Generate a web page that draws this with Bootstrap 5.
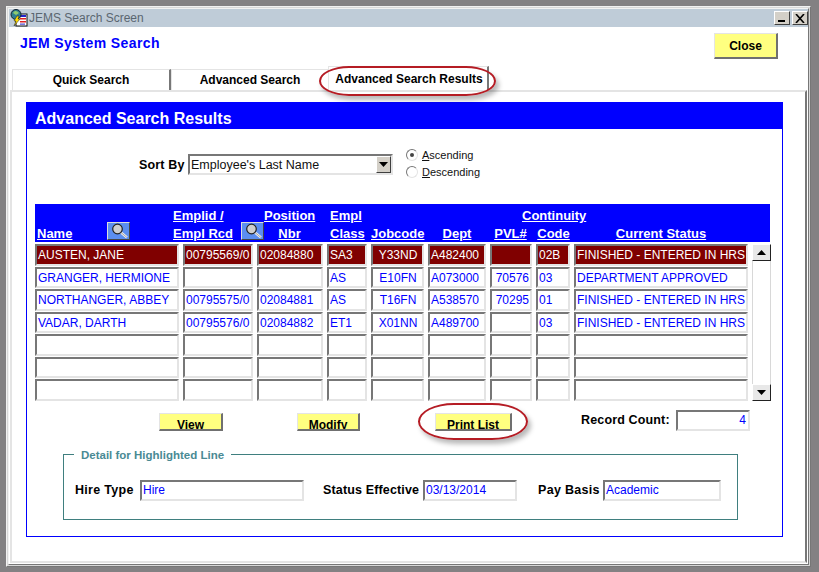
<!DOCTYPE html>
<html lang="en">
<head>
<meta charset="utf-8">
<title>JEMS Search Screen</title>
<link href="https://cdn.jsdelivr.net/npm/bootstrap@5.3.0/dist/css/bootstrap.min.css" rel="stylesheet">
<style>
html,body{margin:0;height:572px;overflow:hidden;background:#838183;}
body{font-family:"Liberation Sans",Arial,sans-serif;font-size:12px;color:#000;padding:6px 8px 5px 6px;}
.win{position:relative;width:805px;height:561px;background:#fff;border:3px solid;border-color:#f2f2f2 #777 #777 #f2f2f2;outline:1px solid #d8d8d8;outline-offset:-2px;}
.tbar{height:18px;background:#bfccd8;color:#5a6670;font-size:12px;line-height:19px;}
.wbtns{gap:2px;margin-top:2px;}
.wbtn{width:16px;height:14px;background:#d4d0c8;border:1px solid;border-color:#fff #404040 #404040 #fff;display:flex;align-items:center;justify-content:center;}
.sysico{width:18px;height:18px;flex:none;margin:0 1px 0 1px;}
.hdrow{height:40px;padding:6px 30px 0 11px;}
.jem{color:#0000ff;font-weight:700;font-size:14px;letter-spacing:.4px;line-height:20px;}
.ybtn{background:#ffff80;border:1px solid;border-color:#e4e4e4 #707070 #707070 #e4e4e4;border-width:1px 2px 2px 1px;font-weight:700;font-size:12px;color:#000;padding:0;}
.closeb{width:64px;height:26px;padding-top:1px;}
.tabs{height:23px;padding-left:3px;align-items:flex-end;}
.tabi{height:21px;border:1px solid #e4e4e4;border-bottom:0;font-weight:700;font-size:12px;text-align:center;line-height:20px;}
.t1{width:159px;border-right:2px solid #777;}
.t2{width:157px;border-right:0;}
.t3{width:161px;height:24px;line-height:25px;border-right:2px solid #777;padding-left:2px;}
.tabbody{width:797px;height:473px;margin-left:1px;border:2px solid #e4e4e4;border-right-color:#777;padding:10px 0 0 14px;}
.panel{width:757px;height:435px;border:1px solid #0000ff;}
.phd{height:27px;background:#0000ff;color:#fff;font-weight:700;font-size:16px;line-height:33px;padding-left:8px;margin-top:-1px;overflow:hidden;}
.sortrow{height:75px;padding-top:1px;}
.sortlbl{font-weight:700;font-size:12.5px;margin-left:112px;width:49px;letter-spacing:.15px;padding-top:26px;}
.sel{width:205px;height:21px;margin-top:24px;border:2px solid;border-color:#777 #e4e4e4 #e4e4e4 #777;font-size:12.5px;line-height:18px;padding-left:1px;position:relative;color:#111;}
.selb{position:absolute;right:0;top:0;width:15px;height:17px;background:#d4d0c8;border:1px solid;border-color:#fff #404040 #404040 #fff;display:flex;align-items:center;justify-content:center;}
.radios{margin-left:13px;padding-top:16px;font-size:11px;color:#111;}
.rad{height:17.5px;}
.dot{width:12px;height:12px;border-radius:50%;border:1px solid;border-color:#777 #e4e4e4 #e4e4e4 #777;margin-right:4px;display:flex;align-items:center;justify-content:center;}
.dot i{width:4px;height:4px;border-radius:50%;background:#444;display:block;}
.ghead{display:grid;grid-template-columns:138px 91px 66px 41px 57px 62px 46px 38px 196px;grid-template-rows:18px 18px;margin-left:8px;width:735px;height:38px;background:#0000ff;color:#fff;font-weight:700;font-size:13px;text-decoration:underline;line-height:18px;padding-top:3px;}
.gh{position:relative;white-space:nowrap;text-align:center;grid-row:2;}
.top{grid-row:1;}
.g1{grid-column:1;text-align:left;padding-left:2px;}
.g2{grid-column:2;text-align:left;}
.g3{grid-column:3;padding-right:15px;}
.g4{grid-column:4;text-align:left;}
.g5{grid-column:5;text-align:left;}
.g6{grid-column:6;padding-right:4px;}
.g7{grid-column:7;padding-right:5px;}
.g8{grid-column:8;padding-right:3px;}
.g9{grid-column:9;padding-right:22px;}
.gcont{grid-column:7/9;text-align:left;padding-left:32px;}
.zoombtn{position:absolute;top:-3px;width:23px;height:18px;background:#5b8ef0;border:1px solid;border-color:#dcdcdc #444 #444 #dcdcdc;display:flex;text-decoration:none;}
.z1{left:72px;}
.z2{left:68px;}
.tblwrap{position:relative;width:735px;margin:2px 0 0 8px;}
.grd{display:grid;grid-template-columns:148px 74px 70px 44px 57px 62px 46px 38px 178px;}
.cell{height:21.5px;margin:0 4px 1px 0;border:2px solid;border-color:#777 #e4e4e4 #e4e4e4 #777;color:#0000ff;font-size:12px;line-height:19px;padding-left:1px;white-space:nowrap;overflow:hidden;}
.r{text-align:right;padding:0 1px 0 0;}
.c{text-align:center;}
.hi{background:#800000;color:#fff;}
.sb{position:absolute;left:717px;top:0;width:19px;height:157px;background:#fff;border:1px solid #d8d8d8;display:flex;flex-direction:column;justify-content:space-between;}
.sbb{height:17px;background:#e8e8e8;border:1px solid;border-color:#fff #222 #222 #fff;margin:-1px;display:flex;align-items:center;justify-content:center;}
.acts{height:42.5px;margin-left:132px;}
.vb{height:18px;line-height:22px;overflow:hidden;margin-top:11px;}
.bview{width:64px;margin-right:74px;}
.bmod{width:63px;margin-right:75px;}
.bprint{width:77px;}
.recl{font-weight:700;font-size:12.5px;letter-spacing:.15px;margin:9px 0 0 69px;width:95px;}
.inp{height:21px;border:2px solid;border-color:#777 #e4e4e4 #e4e4e4 #777;color:#0000ff;font-size:12px;line-height:17px;padding-left:1px;white-space:nowrap;}
.rec{width:74px;margin-top:8px;text-align:right;padding-right:2px;}
.detail{position:relative;width:675px;height:66px;margin:10px 0 0 36px;border:1px solid #3f7f7f;display:flex;align-items:center;padding:6px 0 0 11px;}
.leg{position:absolute;top:-8px;left:10px;background:#fff;padding:0 7px;color:#4a8a94;font-weight:700;font-size:11.5px;line-height:16px;}
.dl{font-weight:700;font-size:12.5px;letter-spacing:.3px;white-space:nowrap;padding-top:1px;}
.d1{width:65px;}
.d2{width:100px;letter-spacing:.15px;}
.d3{width:65px;}
.i1{width:164px;margin-right:19px;}
.i2{width:94px;margin-right:21px;}
.i3{width:118px;}
.oval{position:absolute;border:2px solid #b51c24;box-shadow:3px 4px 5px rgba(0,0,0,.28);pointer-events:none;}
.ov1{left:310px;top:57px;width:177px;height:30px;border-radius:30px/50%;}
.ov2{left:409px;top:394px;width:110px;height:37px;border-radius:36px/50%;}
</style>
</head>
<body>
<div class="win">
  <div class="tbar d-flex align-items-start">
    <svg class="sysico" viewBox="0 0 18 18"><rect x="6" y="5" width="11" height="12" fill="#fff" stroke="#111"/><rect x="7" y="6" width="9" height="2" fill="#22c"/><rect x="10" y="9" width="6" height="1.5" fill="#d22"/><rect x="10" y="12" width="6" height="1.5" fill="#d22"/><rect x="10" y="14.6" width="5" height="1" fill="#22c"/><circle cx="6" cy="5.5" r="5" fill="#2f7f8f" stroke="#123"/><path d="M3 4c2-3 4-2 6 0L6 6z" fill="#8ecb70"/><path d="M7 7 4 12h2l-2 5 6-7H8l1-3z" fill="#fd0" stroke="#222" stroke-width=".5"/></svg>
    <span>JEMS Search Screen</span>
    <div class="ms-auto d-flex wbtns">
      <div class="wbtn"><svg width="8" height="8" viewBox="0 0 8 8"><rect x="0" y="6" width="7" height="2" fill="#000"/></svg></div>
      <div class="wbtn"><svg width="10" height="9" viewBox="0 0 10 9"><path d="M1 0l8 9M9 0l-8 9" stroke="#000" stroke-width="1.6"/></svg></div>
    </div>
  </div>
  <div class="hdrow d-flex justify-content-between align-items-start">
    <div class="jem">JEM System Search</div>
    <button class="ybtn closeb" type="button">Close</button>
  </div>
  <div class="tabs d-flex">
    <div class="tabi t1">Quick Search</div>
    <div class="tabi t2">Advanced Search</div>
    <div class="tabi t3">Advanced Search Results</div>
  </div>
  <div class="tabbody">
    <div class="panel">
      <div class="phd">Advanced Search Results</div>
      <div class="sortrow d-flex">
        <div class="sortlbl">Sort By</div>
        <div class="sel">Employee's Last Name<span class="selb"><svg width="9" height="5" viewBox="0 0 9 5"><path d="M0 0h9L4.5 5z"/></svg></span></div>
        <div class="radios">
          <div class="rad d-flex align-items-center"><span class="dot"><i></i></span><span><u>A</u>scending</span></div>
          <div class="rad d-flex align-items-center"><span class="dot"></span><span><u>D</u>escending</span></div>
        </div>
      </div>
      <div class="ghead">
        <div class="gh g1">Name<span class="zoombtn z1"><svg width="21" height="16" viewBox="0 0 21 16"><path d="M13 9.5l6 5" stroke="#eee" stroke-width="2.4"/><path d="M13 9.5l6 5" stroke="#777" stroke-width=".6"/><circle cx="9.5" cy="6" r="4.8" fill="#cfcfcf" stroke="#222" stroke-width="1.2"/></svg></span></div>
        <div class="gh top g2">Emplid /</div>
        <div class="gh g2">Empl Rcd</div>
        <div class="gh top g3">Position</div>
        <div class="gh g3">Nbr</div>
        <div class="gh top g4">Empl</div>
        <div class="gh g4">Class</div>
        <div class="gh g5">Jobcode</div>
        <div class="gh g6">Dept</div>
        <div class="gh g7">PVL#</div>
        <div class="gh top gcont">Continuity</div>
        <div class="gh g8">Code</div>
        <div class="gh g9">Current Status</div>
        <div class="gh g2"><span class="zoombtn z2"><svg width="21" height="16" viewBox="0 0 21 16"><path d="M13 9.5l6 5" stroke="#eee" stroke-width="2.4"/><path d="M13 9.5l6 5" stroke="#777" stroke-width=".6"/><circle cx="9.5" cy="6" r="4.8" fill="#cfcfcf" stroke="#222" stroke-width="1.2"/></svg></span></div>
      </div>
      <div class="tblwrap">
        <div class="grd">
          <div class="cell hi">AUSTEN, JANE</div><div class="cell hi">00795569/0</div><div class="cell hi">02084880</div><div class="cell hi">SA3</div><div class="cell hi c">Y33ND</div><div class="cell hi">A482400</div><div class="cell hi r"></div><div class="cell hi">02B</div><div class="cell hi">FINISHED - ENTERED IN HRS</div>
          <div class="cell">GRANGER, HERMIONE</div><div class="cell"></div><div class="cell"></div><div class="cell">AS</div><div class="cell c">E10FN</div><div class="cell">A073000</div><div class="cell r">70576</div><div class="cell">03</div><div class="cell">DEPARTMENT APPROVED</div>
          <div class="cell">NORTHANGER, ABBEY</div><div class="cell">00795575/0</div><div class="cell">02084881</div><div class="cell">AS</div><div class="cell c">T16FN</div><div class="cell">A538570</div><div class="cell r">70295</div><div class="cell">01</div><div class="cell">FINISHED - ENTERED IN HRS</div>
          <div class="cell">VADAR, DARTH</div><div class="cell">00795576/0</div><div class="cell">02084882</div><div class="cell">ET1</div><div class="cell c">X01NN</div><div class="cell">A489700</div><div class="cell r"></div><div class="cell">03</div><div class="cell">FINISHED - ENTERED IN HRS</div>
          <div class="cell"></div><div class="cell"></div><div class="cell"></div><div class="cell"></div><div class="cell"></div><div class="cell"></div><div class="cell"></div><div class="cell"></div><div class="cell"></div>
          <div class="cell"></div><div class="cell"></div><div class="cell"></div><div class="cell"></div><div class="cell"></div><div class="cell"></div><div class="cell"></div><div class="cell"></div><div class="cell"></div>
          <div class="cell"></div><div class="cell"></div><div class="cell"></div><div class="cell"></div><div class="cell"></div><div class="cell"></div><div class="cell"></div><div class="cell"></div><div class="cell"></div>
        </div>
        <div class="sb">
          <div class="sbb"><svg width="9" height="5" viewBox="0 0 9 5"><path d="M0 5h9L4.5 0z"/></svg></div>
          <div class="sbb"><svg width="9" height="5" viewBox="0 0 9 5"><path d="M0 0h9L4.5 5z"/></svg></div>
        </div>
      </div>
      <div class="acts d-flex">
        <button class="ybtn vb bview" type="button">View</button>
        <button class="ybtn vb bmod" type="button">Modify</button>
        <button class="ybtn vb bprint" type="button">Print List</button>
        <div class="recl">Record Count:</div>
        <div class="inp rec">4</div>
      </div>
      <div class="detail">
        <div class="leg">Detail for Highlighted Line</div>
        <span class="dl d1">Hire Type</span>
        <div class="inp i1">Hire</div>
        <span class="dl d2">Status Effective</span>
        <div class="inp i2">03/13/2014</div>
        <span class="dl d3">Pay Basis</span>
        <div class="inp i3">Academic</div>
      </div>
    </div>
  </div>
  <div class="oval ov1"></div>
  <div class="oval ov2"></div>
</div>
<script src="https://cdn.jsdelivr.net/npm/bootstrap@5.3.0/dist/js/bootstrap.bundle.min.js"></script>
</body>
</html>
